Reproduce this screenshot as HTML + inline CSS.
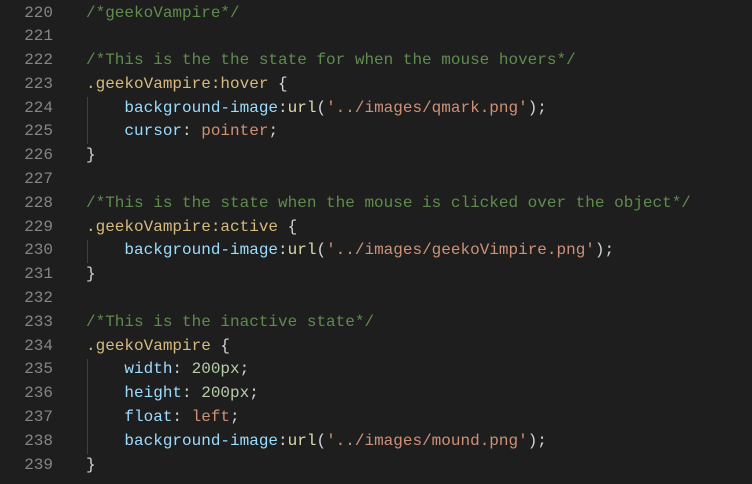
<!DOCTYPE html>
<html><head><style>
html,body{margin:0;padding:0;background:#1e1e1e;width:752px;height:484px;overflow:hidden}
.w{position:relative;font-family:"Liberation Mono",monospace;font-size:16px;line-height:23.8px;padding-top:1.5px}
.l{height:23.8px;white-space:pre;position:relative}
.n{position:absolute;left:0;width:53px;text-align:right;color:#858585}
.c{position:absolute;left:86px;color:#d4d4d4}
.cm{color:#608b4e;font-style:normal}.s{color:#d7ba7d}.p{color:#9cdcfe}.v{color:#ce9178}.num{color:#b5cea8}.f{color:#dcdcaa}
.g{position:absolute;left:87px;width:1px;background:#404040}
</style></head><body><div class="w">
<div class="g" style="top:96.7px;height:47.6px"></div>
<div class="g" style="top:239.5px;height:23.8px"></div>
<div class="g" style="top:358.5px;height:95.2px"></div>
<div class="l"><span class="n">220</span><span class="c cm">/*geekoVampire*/</span></div>
<div class="l"><span class="n">221</span></div>
<div class="l"><span class="n">222</span><span class="c cm">/*This is the the state for when the mouse hovers*/</span></div>
<div class="l"><span class="n">223</span><span class="c"><span class="s">.geekoVampire:hover</span> {</span></div>
<div class="l"><span class="n">224</span><span class="c">    <span class="p">background-image</span>:<span class="f">url</span>(<span class="v">'../images/qmark.png'</span>);</span></div>
<div class="l"><span class="n">225</span><span class="c">    <span class="p">cursor</span>: <span class="v">pointer</span>;</span></div>
<div class="l"><span class="n">226</span><span class="c">}</span></div>
<div class="l"><span class="n">227</span></div>
<div class="l"><span class="n">228</span><span class="c cm">/*This is the state when the mouse is clicked over the object*/</span></div>
<div class="l"><span class="n">229</span><span class="c"><span class="s">.geekoVampire:active</span> {</span></div>
<div class="l"><span class="n">230</span><span class="c">    <span class="p">background-image</span>:<span class="f">url</span>(<span class="v">'../images/geekoVimpire.png'</span>);</span></div>
<div class="l"><span class="n">231</span><span class="c">}</span></div>
<div class="l"><span class="n">232</span></div>
<div class="l"><span class="n">233</span><span class="c cm">/*This is the inactive state*/</span></div>
<div class="l"><span class="n">234</span><span class="c"><span class="s">.geekoVampire</span> {</span></div>
<div class="l"><span class="n">235</span><span class="c">    <span class="p">width</span>: <span class="num">200px</span>;</span></div>
<div class="l"><span class="n">236</span><span class="c">    <span class="p">height</span>: <span class="num">200px</span>;</span></div>
<div class="l"><span class="n">237</span><span class="c">    <span class="p">float</span>: <span class="v">left</span>;</span></div>
<div class="l"><span class="n">238</span><span class="c">    <span class="p">background-image</span>:<span class="f">url</span>(<span class="v">'../images/mound.png'</span>);</span></div>
<div class="l"><span class="n">239</span><span class="c">}</span></div>
</div></body></html>
